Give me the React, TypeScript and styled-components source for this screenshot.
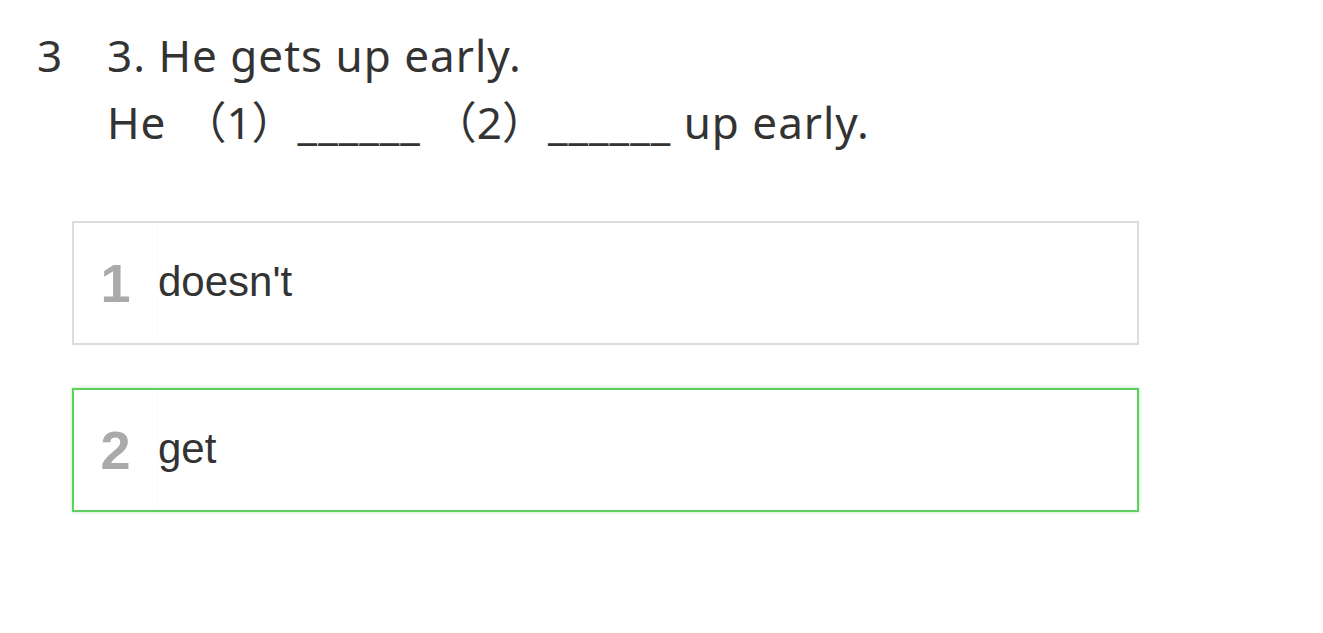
import React from 'react';
import styled, { createGlobalStyle } from 'styled-components';

const GlobalStyle = createGlobalStyle`
  * {
    margin: 0;
    padding: 0;
    box-sizing: border-box;
  }

  html, body {
    width: 100%;
    height: 100%;
    background: #fff;
    overflow: hidden;
  }
`;

const Page = styled.div`
  padding: 22px 0 0 37px;
  color: #333;
`;

const Question = styled.div`
  display: flex;
  font-family: "Noto Sans", "Open Sans", "Noto Sans CJK SC", sans-serif;
  font-size: 44px;
  letter-spacing: 1px;
  line-height: 67px;
`;

const QNumber = styled.div`
  width: 70px;
  flex-shrink: 0;
`;

const QBody = styled.div``;

const Paren = styled.span`
  letter-spacing: 0;
`;

const Gap = styled.span<{ $w: number }>`
  display: inline-block;
  width: ${(p) => p.$w}px;
`;

const Options = styled.div`
  margin: 65px 0 0 35px;
  width: 1067px;
  display: flex;
  flex-direction: column;
  gap: 43px;
`;

const Option = styled.div<{ $correct?: boolean }>`
  display: flex;
  align-items: center;
  height: 124px;
  border: 2px solid ${(p) => (p.$correct ? '#5ccf5c' : '#dcdcdc')};
  box-shadow: ${(p) => (p.$correct ? '0 0 3px rgba(92, 207, 92, 0.5)' : 'none')};
  font-family: "Liberation Sans", Arial, sans-serif;
`;

const OptNum = styled.div`
  width: 84px;
  align-self: stretch;
  display: flex;
  align-items: center;
  justify-content: center;
  border-right: 1px solid #fafafa;
  font-size: 54px;
  font-weight: bold;
  color: #aaa;
`;

const OptText = styled.div`
  font-size: 42px;
  color: #333;
  margin-bottom: 3px;
`;

const App: React.FC = () => {
  return (
    <>
      <GlobalStyle />
      <Page>
        <Question>
          <QNumber>3</QNumber>
          <QBody>
            <div>3. He gets up early.</div>
            <div>
              He<Gap $w={16} /><Paren>（1）</Paren><Gap $w={2} />______<Gap $w={12} />
              <Paren>（2）</Paren><Gap $w={2} />______ up early.
            </div>
          </QBody>
        </Question>
        <Options>
          <Option>
            <OptNum>1</OptNum>
            <OptText>doesn't</OptText>
          </Option>
          <Option $correct>
            <OptNum>2</OptNum>
            <OptText>get</OptText>
          </Option>
        </Options>
      </Page>
    </>
  );
};

export default App;
